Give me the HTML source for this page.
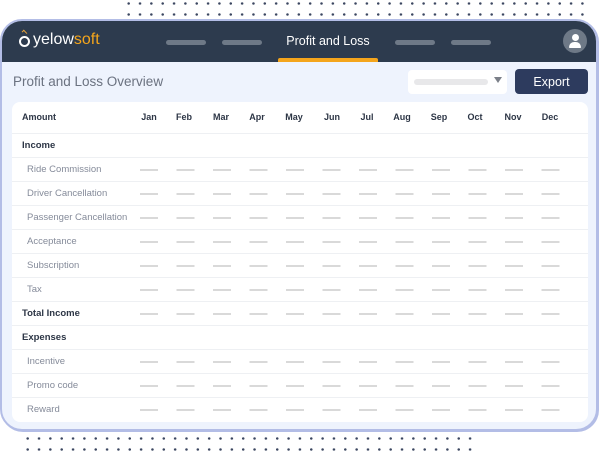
<!DOCTYPE html>
<html><head><style>
*{margin:0;padding:0;box-sizing:border-box}
body{width:600px;height:452px;background:#fff;position:relative;overflow:hidden;font-family:"Liberation Sans",sans-serif}
.dots{position:absolute;background-image:radial-gradient(circle,#3b4660 1.1px,transparent 1.4px);background-size:11.35px 11px}
.frame{position:absolute;left:0;top:19px;width:598px;height:412px;border:2px solid #b3bde6;border-radius:22px;background:#eef3fd;overflow:hidden;box-shadow:1px 1px 0 #b3bde6}
.hdr{position:absolute;left:0;top:0;width:100%;height:41px;background:#2d3b4e}
.pill{position:absolute;top:19px;width:40px;height:5px;border-radius:3px;background:#6e7987}
.abs{position:absolute}
.card{position:absolute;left:10px;top:81px;width:576px;height:320px;background:#fff;border-radius:8px}
.row{position:absolute;left:0;width:100%;height:24px;border-top:1px solid #eef0f3;font-size:9.5px;color:#858b9a;line-height:24px;padding-left:15px}
.row.b{color:#2d3646;font-weight:bold;padding-left:10px}
.d{background-image:repeating-linear-gradient(90deg,#d9d9d9 0,#d9d9d9 18px,transparent 18px,transparent 36.5px);background-size:420px 2px;background-repeat:no-repeat;background-position:128px 11px}
.th{position:absolute;top:10px;font-size:9px;font-weight:bold;color:#2d3646;width:40px;text-align:center;margin-left:-20px}
</style></head><body>
<div class="dots" style="left:123px;top:-2px;width:462px;height:22px"></div>
<div class="dots" style="left:22px;top:433px;width:454px;height:22px"></div>
<div class="frame">
 <div class="hdr">
  <div class="abs" style="left:17px;top:15px;width:11px;height:11px;border:2.5px solid #fff;border-radius:50%"></div>
  <div class="abs" style="left:20px;top:10px;width:5px;height:3px;border-top:1.5px solid #e8a33a;border-left:1.5px solid #e8a33a;transform:rotate(45deg)"></div>
  <div class="abs" style="left:31px;top:10px;font-size:16px;color:#fff">yelow<span style="color:#f4a51c">soft</span></div>
  <div class="pill" style="left:164px"></div><div class="pill" style="left:220px"></div>
  <div class="pill" style="left:393px"></div><div class="pill" style="left:449px"></div>
  <div class="abs" style="left:276px;top:13px;width:100px;text-align:center;color:#fff;font-size:12.5px">Profit and Loss</div>
  <div class="abs" style="left:276px;top:37px;width:100px;height:4px;background:#f4a51c;border-radius:2px 2px 0 0"></div>
  <div class="abs" style="left:561px;top:8px;width:24px;height:24px;border-radius:50%;background:#6e7987">
   <div class="abs" style="left:8.5px;top:5px;width:7px;height:7px;border-radius:50%;background:#fff"></div>
   <div class="abs" style="left:6px;top:13px;width:12px;height:6px;border-radius:6px 6px 1px 1px;background:#fff"></div>
  </div>
 </div>
 <div class="abs" style="left:11px;top:53px;font-size:13.5px;color:#6b7280">Profit and Loss Overview</div>
 <div class="abs" style="left:406px;top:49px;width:99px;height:24px;background:#fff;border-radius:4px">
  <div class="abs" style="left:6px;top:9px;width:74px;height:6px;border-radius:3px;background:#e8e8ea"></div>
  <div class="abs" style="left:86px;top:7px;border-left:4px solid transparent;border-right:4px solid transparent;border-top:6px solid #7b7f88"></div>
 </div>
 <div class="abs" style="left:513px;top:48px;width:73px;height:25px;background:#2d3b5e;border-radius:4px;color:#fff;font-size:12.5px;text-align:center;line-height:26px">Export</div>
 <div class="card">
  <div class="abs" style="left:10px;top:10px;font-size:9px;font-weight:bold;color:#2d3646">Amount</div>
  <div class="th" style="left:137px">Jan</div><div class="th" style="left:172px">Feb</div><div class="th" style="left:209px">Mar</div><div class="th" style="left:245px">Apr</div><div class="th" style="left:282px">May</div><div class="th" style="left:320px">Jun</div><div class="th" style="left:355px">Jul</div><div class="th" style="left:390px">Aug</div><div class="th" style="left:427px">Sep</div><div class="th" style="left:463px">Oct</div><div class="th" style="left:501px">Nov</div><div class="th" style="left:538px">Dec</div>
  <div class="row b" style="top:31px">Income</div>
  <div class="row d" style="top:55px">Ride Commission</div>
  <div class="row d" style="top:79px">Driver Cancellation</div>
  <div class="row d" style="top:103px">Passenger Cancellation</div>
  <div class="row d" style="top:127px">Acceptance</div>
  <div class="row d" style="top:151px">Subscription</div>
  <div class="row d" style="top:175px">Tax</div>
  <div class="row b d" style="top:199px">Total Income</div>
  <div class="row b" style="top:223px">Expenses</div>
  <div class="row d" style="top:247px">Incentive</div>
  <div class="row d" style="top:271px">Promo code</div>
  <div class="row d" style="top:295px">Reward</div>
 </div>
</div>
</body></html>
